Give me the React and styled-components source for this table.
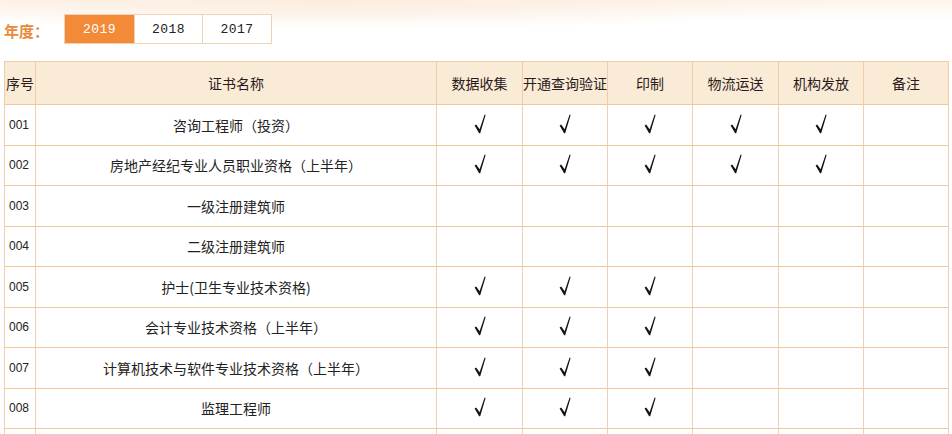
import React, { useState } from "react";
import styled, { createGlobalStyle } from "styled-components";

const GlobalStyle = createGlobalStyle`
  html, body {
    margin: 0;
    padding: 0;
    background: #fff;
  }
  body {
    font-family: "Noto Sans CJK SC", "Liberation Sans", sans-serif;
    color: #222;
  }
`;

const years = ["2019", "2018", "2017"];
const columns = ["数据收集", "开通查询验证", "印制", "物流运送", "机构发放", "备注"];
const widths = [31, 401, 86, 85, 85, 86, 85, 85];

const rows = [
  { no: "001", name: "咨询工程师（投资）", done: 5 },
  { no: "002", name: "房地产经纪专业人员职业资格（上半年）", done: 5 },
  { no: "003", name: "一级注册建筑师", done: 0 },
  { no: "004", name: "二级注册建筑师", done: 0 },
  { no: "005", name: "护士(卫生专业技术资格)", done: 3 },
  { no: "006", name: "会计专业技术资格（上半年）", done: 3 },
  { no: "007", name: "计算机技术与软件专业技术资格（上半年）", done: 3 },
  { no: "008", name: "监理工程师", done: 3 },
];

function Check() {
  return (
    <CheckIcon viewBox="0 0 12 20" aria-label="√">
      <path d="M0.6 11.6 L2.2 10.4 L5.6 15.2 L10.6 0.6 L11.6 0.9 L6.2 19.2 L5.1 19.2 Z" />
    </CheckIcon>
  );
}

export default function App() {
  const [year, setYear] = useState("2019");

  return (
    <>
      <GlobalStyle />
      <Page>
        <YearBar>
          <YearLabel>年度：</YearLabel>
          <Tabs>
            {years.map((y) => (
              <Tab key={y} $active={y === year} onClick={() => setYear(y)}>
                {y}
              </Tab>
            ))}
          </Tabs>
        </YearBar>

        <Table>
          <colgroup>
            {widths.map((w, i) => (
              <Col key={i} $w={w} />
            ))}
          </colgroup>
          <thead>
            <tr>
              <Th>序号</Th>
              <Th>证书名称</Th>
              {columns.map((c) => (
                <Th key={c}>{c}</Th>
              ))}
            </tr>
          </thead>
          <tbody>
            {rows.map((r) => (
              <Row key={r.no}>
                <NoCell>{r.no}</NoCell>
                <Td>{r.name}</Td>
                {columns.map((c, i) => (
                  <CheckCell key={c}>{i < r.done ? <Check /> : null}</CheckCell>
                ))}
              </Row>
            ))}
            {/* next row, only its top edge shows */}
            <Row>
              <NoCell />
              <Td />
              {columns.map((c) => (
                <CheckCell key={c} />
              ))}
            </Row>
          </tbody>
        </Table>
      </Page>
    </>
  );
}

const Page = styled.div`
  height: 434px;
  overflow: hidden;
  padding: 14px 4px 0;
  background:
    radial-gradient(ellipse 520px 30px at 330px 0px, rgba(252, 236, 222, 0.95), rgba(255, 255, 255, 0)),
    linear-gradient(180deg, rgba(253, 243, 234, 0.9) 0px, rgba(255, 255, 255, 0) 22px),
    #fff;
`;

const YearBar = styled.div`
  display: flex;
  align-items: center;
  height: 30px;
`;

const YearLabel = styled.span`
  width: 60px;
  font-size: 15px;
  font-weight: bold;
  color: #e98a3c;
  padding-top: 3px;
`;

const Tabs = styled.div`
  display: flex;
  height: 30px;
  border: 1px solid #f0d2b4;
  box-sizing: border-box;
`;

const Tab = styled.button`
  width: ${({ $active }) => ($active ? "70px" : "68px")};
  height: 28px;
  padding: 0;
  border: none;
  border-right: 1px solid #f0d2b4;
  background: ${({ $active }) => ($active ? "#f28a38" : "#fff")};
  color: ${({ $active }) => ($active ? "#fff" : "#222")};
  font-family: "Liberation Mono", "DejaVu Sans Mono", monospace;
  font-size: 13px;
  letter-spacing: 0.5px;
  cursor: pointer;
  &:last-child {
    border-right: none;
  }
`;

const Table = styled.table`
  margin-top: 17px;
  width: 945px;
  table-layout: fixed;
  border-collapse: collapse;
  border: 1px solid #f3c593;
  font-size: 14px;
`;

const Col = styled.col`
  width: ${({ $w }) => $w}px;
`;

const Th = styled.th`
  height: 42px;
  padding: 0;
  font-weight: normal;
  color: #2a1a1a;
  background: #faebd7;
  border: 1px solid #efcca9;
  border-bottom-color: #f1c89c;
  white-space: nowrap;
  overflow: hidden;
`;

const Row = styled.tr`
  height: 40.5px;
`;

const Td = styled.td`
  padding: 0;
  text-align: center;
  color: #222;
  border: 1px solid #ecd0b4;
  border-bottom-color: #f3c898;
  white-space: nowrap;
`;

const NoCell = styled(Td)`
  text-align: left;
  padding-left: 4px;
  font-family: "Liberation Sans", sans-serif;
  font-size: 12px;
`;

const CheckCell = styled(Td)`
  line-height: 0;
`;

const CheckIcon = styled.svg`
  width: 12px;
  height: 20px;
  fill: #151515;
  position: relative;
  top: -1px;
`;
